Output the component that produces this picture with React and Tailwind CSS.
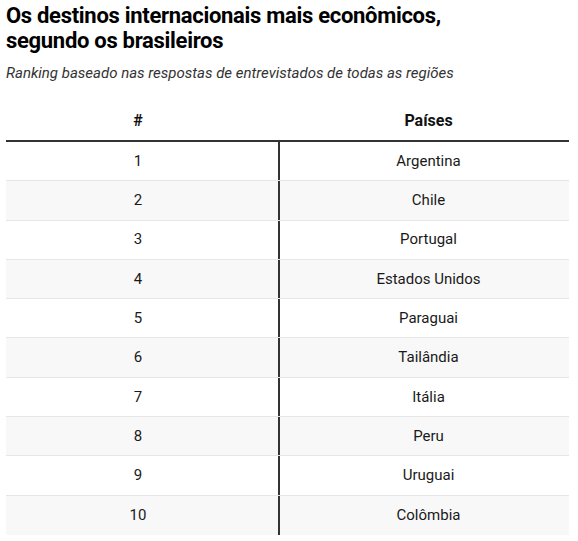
export default function App() {
  const rows = ["Argentina","Chile","Portugal","Estados Unidos","Paraguai","Tailândia","Itália","Peru","Uruguai","Colômbia"];
  return (
    <div className="w-[578px] h-[541px] bg-white pl-[6px] pr-[9px] pt-[3px] text-[#1a1a1a]" style={{fontFamily: "Roboto, 'Liberation Sans', sans-serif"}}>
      <h1 className="text-[22px] font-bold leading-[25px] tracking-[-0.3px] text-black">Os destinos internacionais mais econômicos,<br/>segundo os brasileiros</h1>
      <p className="mt-[10px] text-[15px] italic leading-[20px] text-[#333]">Ranking baseado nas respostas de entrevistados de todas as regiões</p>
      <div className="mt-[28px]">
        <div className="flex pb-[9px] border-b-2 border-[#333] text-[16px] leading-[20px] font-bold text-[#111]">
          <div className="w-[272px] pr-[8px] text-center">#</div>
          <div className="w-[2px]"></div>
          <div className="flex-1 pl-[8px] text-center">Países</div>
        </div>
        {rows.map((c, i) => (
          <div key={i} className={`flex h-[39.3px] text-[15px] border-b border-[#e6e6e6] last:border-b-0 ${i % 2 === 1 ? "bg-[#f8f8f8]" : "bg-white"}`}>
            <div className="w-[272px] pr-[8px] flex items-center justify-center">{i + 1}</div>
            <div className="w-[2px] bg-[#333]"></div>
            <div className="flex-1 pl-[8px] flex items-center justify-center">{c}</div>
          </div>
        ))}
      </div>
    </div>
  );
}
